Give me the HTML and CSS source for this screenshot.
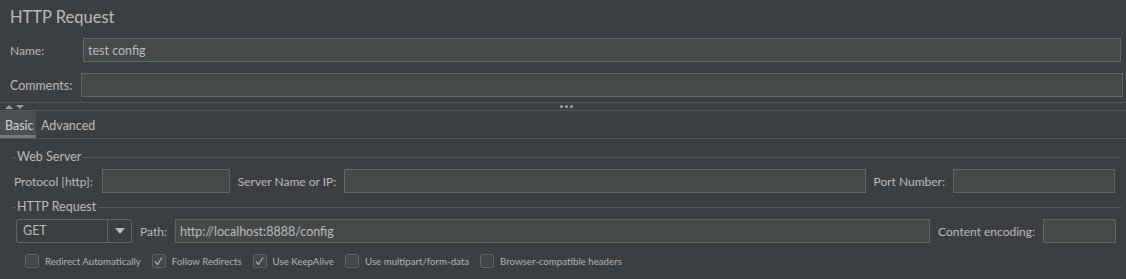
FILE: index.html
```html
<!DOCTYPE html>
<html>
<head>
<meta charset="utf-8">
<link rel="stylesheet" href="styles.css">
</head>
<body>
<div class="page">
  <div class="title">HTTP Request</div>
  <div class="row row-name">
    <span class="lbl lbl-name">Name:</span>
    <div class="field grow"><span class="val">test config</span></div>
  </div>
  <div class="row row-comments">
    <span class="lbl lbl-comments">Comments:</span>
    <div class="field grow"></div>
  </div>
  <div class="splitter">
    <div class="arrows">
      <svg width="20" height="6" viewBox="0 0 20 6"><polygon points="5,1 9,5 1,5" fill="#9a9d9f"/><polygon points="13,1 21,1 17,5" fill="#9a9d9f" transform="translate(-1,0)"/></svg>
    </div>
    <div class="dots"><i></i><i></i><i></i></div>
  </div>
  <div class="tabbar">
    <div class="tab active">Basic</div>
    <div class="tab">Advanced</div>
  </div>
  <div class="content">
    <div class="group-title"><span class="gl-left"></span><span class="gt">Web Server</span><span class="gl-right"></span></div>
    <div class="row row-server">
      <span class="lbl">Protocol [http]:</span>
      <div class="field f-proto"></div>
      <span class="lbl lbl-gap">Server Name or IP:</span>
      <div class="field grow"></div>
      <span class="lbl lbl-gap">Port Number:</span>
      <div class="field f-port"></div>
    </div>
    <div class="group-title g2"><span class="gl-left"></span><span class="gt">HTTP Request</span><span class="gl-right"></span></div>
    <div class="row row-req">
      <div class="combo">
        <span class="combo-val">GET</span>
        <span class="combo-btn"><svg width="10" height="6" viewBox="0 0 10 6"><polygon points="0,0 10,0 5,6" fill="#bbbbbb"/></svg></span>
      </div>
      <span class="lbl lbl-gap">Path:</span>
      <div class="field grow"><span class="val">http://localhost:8888/config</span></div>
      <span class="lbl lbl-gap">Content encoding:</span>
      <div class="field f-enc"></div>
    </div>
    <div class="checks">
      <label class="chk"><span class="box"></span><span class="ctext">Redirect Automatically</span></label>
      <label class="chk"><span class="box"><svg width="11" height="11" viewBox="0 0 11 11"><polyline points="2,5.5 4.5,8.5 9,1.5" fill="none" stroke="#a9acae" stroke-width="1.3"/></svg></span><span class="ctext">Follow Redirects</span></label>
      <label class="chk"><span class="box"><svg width="11" height="11" viewBox="0 0 11 11"><polyline points="2,5.5 4.5,8.5 9,1.5" fill="none" stroke="#a9acae" stroke-width="1.3"/></svg></span><span class="ctext">Use KeepAlive</span></label>
      <label class="chk"><span class="box"></span><span class="ctext">Use multipart/form-data</span></label>
      <label class="chk"><span class="box"></span><span class="ctext">Browser-compatible headers</span></label>
    </div>
  </div>
</div>
</body>
</html>
```
FILE: styles.css
```css
* { box-sizing: border-box; }
html, body {
  margin: 0;
  padding: 0;
  background: #3c3f41;
}
body {
  width: 1126px;
  height: 279px;
  overflow: hidden;
  font-family: "Lato", "Noto Sans", "DejaVu Sans", sans-serif;
  font-size: 12px;
  color: #bbbbbb;
}
.page {
  display: flex;
  flex-direction: column;
}
.title {
  font-size: 16.5px;
  line-height: 20px;
  padding: 7px 0 0 10px;
  height: 38px;
  color: #bbbbbb;
}
.row {
  display: flex;
  align-items: center;
}
.lbl {
  white-space: nowrap;
  color: #bbbbbb;
}
.field {
  height: 24px;
  background: #45494a;
  border: 1px solid #646464;
  display: flex;
  align-items: center;
}
.grow { flex: 1; }
.val {
  padding-left: 4px;
  font-size: 12.5px;
  color: #bbbbbb;
}
.row-name { padding: 0 5px 0 10px; }
.lbl-name { width: 73px; }
.row-comments { padding: 0 3px 0 10px; margin-top: 11px; }
.lbl-comments { width: 71px; font-size: 12.5px; }

.splitter {
  margin-top: 5px;
  height: 9px;
  border-top: 1px solid #555759;
  border-bottom: 1px solid #555759;
  position: relative;
  display: flex;
  align-items: center;
  justify-content: center;
}
.arrows {
  position: absolute;
  left: 4px;
  top: 1px;
  height: 6px;
  display: flex;
}
.dots {
  display: flex;
  gap: 2px;
  margin-left: 6px;
}
.dots i {
  display: block;
  width: 3px;
  height: 3px;
  border-radius: 50%;
  background: #a0a3a5;
}
.tabbar {
  display: flex;
  height: 28px;
  border-bottom: 1px solid #505355;
}
.tab {
  height: 27px;
  line-height: 30px;
  padding: 0 4px 0 5px;
  font-size: 12.5px;
  color: #bbbbbb;
}
.tab.active {
  background: #4b4f52;
  border-bottom: 3px solid #747a80;
  width: 36px;
  line-height: 30px;
  color: #d0d3d6;
}
.tab + .tab { padding-left: 5px; }

.content {
  display: flex;
  flex-direction: column;
}
.group-title {
  display: flex;
  align-items: center;
  height: 14px;
  margin-top: 11px;
  padding: 0 5px 0 12px;
}
.group-title.g2 { margin-top: 7px; }
.gl-left {
  width: 4px;
  height: 1px;
  background: #56595b;
}
.gl-right {
  flex: 1;
  height: 1px;
  background: #56595b;
  margin-left: 2px;
}
.gt {
  padding-left: 1px;
  line-height: 14px;
  font-size: 12.5px;
}
.row-server {
  margin-top: 5px;
  padding: 0 11px 0 14px;
}
.f-proto { width: 128px; margin-left: 9px; }
.f-port { width: 162px; }
.lbl-gap { margin-left: 8px; margin-right: 8px; }
.row-req {
  margin-top: 5px;
  padding: 0 10px 0 16px;
}
.combo {
  width: 116px;
  height: 24px;
  display: flex;
  border: 1px solid #646464;
  border-radius: 2px;
  background: #3c3f41;
}
.combo-val {
  flex: 1;
  padding-left: 6px;
  line-height: 22px;
  font-size: 12.5px;
}
.combo-btn {
  width: 24px;
  border-left: 1px solid #646464;
  display: flex;
  align-items: center;
  justify-content: center;
}
.f-enc { width: 73px; margin-left: 0; }
.checks {
  display: flex;
  align-items: center;
  margin-top: 11px;
  padding-left: 25px;
  height: 14px;
}
.chk {
  display: flex;
  align-items: center;
  margin-right: 11px;
}
.box {
  width: 14px;
  height: 14px;
  border: 1px solid #5e6163;
  border-radius: 2px;
  background: #43474a;
  display: flex;
  align-items: center;
  justify-content: center;
}
.ctext {
  margin-left: 6px;
  font-size: 9.7px;
  color: #b0b3b5;
  white-space: nowrap;
}
```
